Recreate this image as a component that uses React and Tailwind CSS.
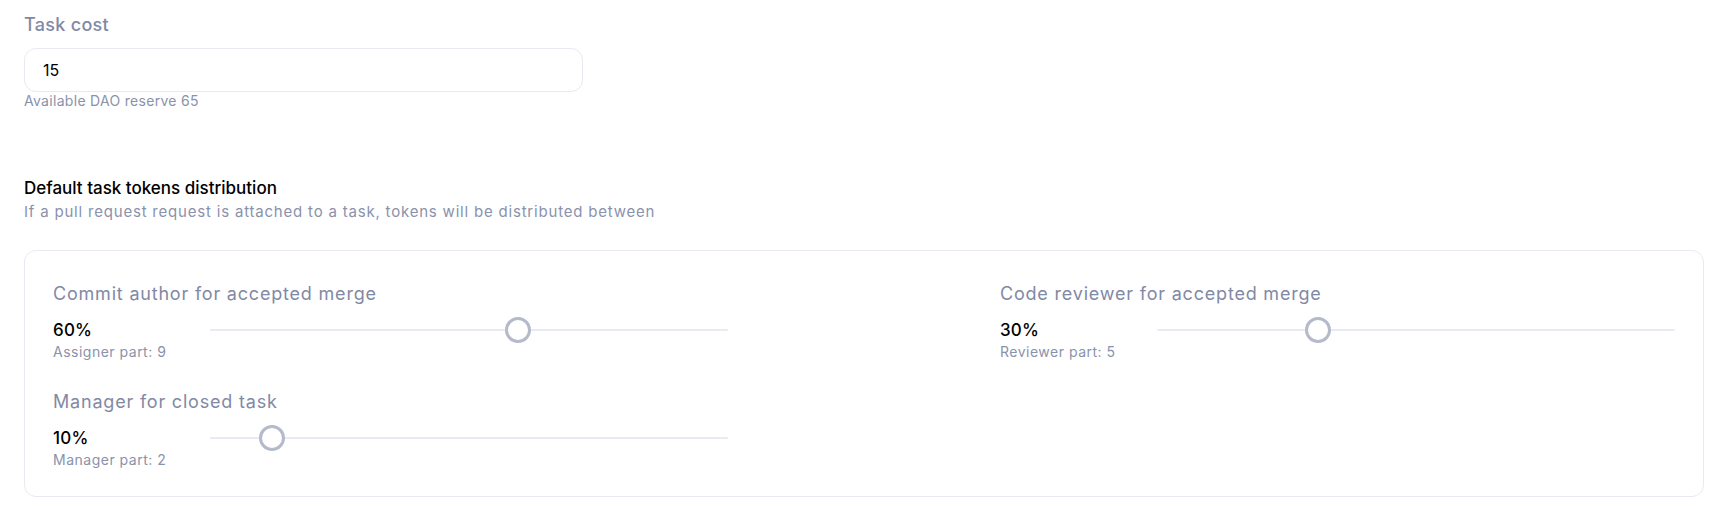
import React from 'react';

const FONT = "font-['Inter','Noto_Sans',sans-serif]";

function Slider({ value }) {
  return (
    <div className="relative flex-1 h-[26px] flex items-center">
      <div className="h-[2px] w-full bg-[#e8ebf3] rounded-full" />
      <div
        className="absolute top-0 w-[26px] h-[26px] rounded-full bg-white border-[3px] border-[#b4bac9]"
        style={{ left: `calc((100% - 26px) * ${value / 100})` }}
      />
    </div>
  );
}

function Share({ title, value, part }) {
  return (
    <div className="flex flex-col">
      <div className="text-[18px] leading-[26px] tracking-[0.8px] text-[#8189a5]">{title}</div>
      <div className="flex items-start mt-[10px]">
        <div className="w-[157px] shrink-0">
          <div className="text-[17px] leading-[26px] tracking-[0.2px] text-black font-medium">{value}%</div>
          <div className="text-[14px] leading-[18px] tracking-[0.5px] text-[#8a92ab]">{part}</div>
        </div>
        <Slider value={value} />
      </div>
    </div>
  );
}

export default function App() {
  return (
    <div className={`min-h-screen bg-white pl-6 pr-[21px] pt-[12px] ${FONT}`}>
      {/* Task cost */}
      <div className="text-[18px] leading-[26px] tracking-[0.3px] text-[#8189a5] font-medium">Task cost</div>
      <div className="mt-[10px] w-[559px] h-[44px] rounded-xl border border-[#e7eaf1] flex items-center px-[18px] text-[16px] text-black">
        15
      </div>
      <div className="text-[14px] leading-[18px] tracking-[0.3px] text-[#8a92ab]">Available DAO reserve 65</div>

      {/* Distribution */}
      <div className="mt-[66px] text-[17px] leading-[24px] text-black font-medium">
        Default task tokens distribution
      </div>
      <div className="mt-px text-[15px] leading-[22px] tracking-[0.8px] text-[#8a92ab]">
        If a pull request request is attached to a task, tokens will be distributed between
      </div>

      <div className="mt-[27px] rounded-xl border border-[#e7eaf1] px-7 pt-[30px] pb-[27px]">
        <div className="grid grid-cols-2 gap-x-[272px] gap-y-[28px]">
          <Share title="Commit author for accepted merge" value={60} part="Assigner part: 9" />
          <Share title="Code reviewer for accepted merge" value={30} part="Reviewer part: 5" />
          <Share title="Manager for closed task" value={10} part="Manager part: 2" />
        </div>
      </div>
    </div>
  );
}
